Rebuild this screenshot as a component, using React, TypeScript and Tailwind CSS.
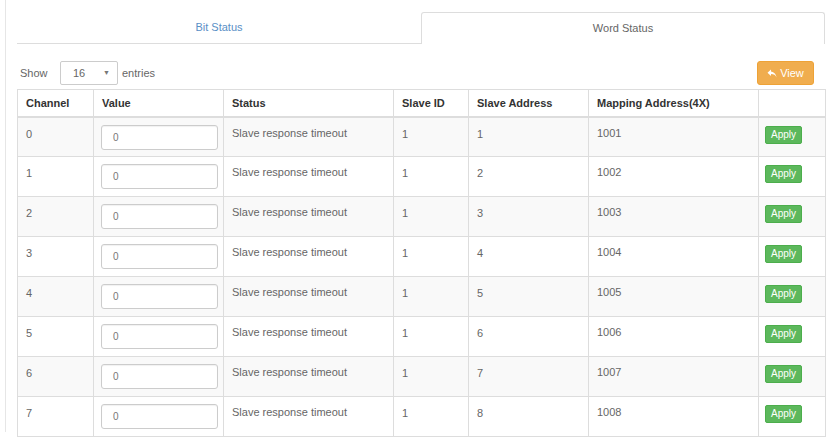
import React from "react";

const rows = Array.from({ length: 8 }, (_, i) => ({
  channel: i,
  value: "0",
  status: "Slave response timeout",
  slaveId: 1,
  slaveAddress: i + 1,
  mapping: 1001 + i,
}));

const cols = [
  { label: "Channel", w: "w-[76px]" },
  { label: "Value", w: "w-[130px]" },
  { label: "Status", w: "w-[170px]" },
  { label: "Slave ID", w: "w-[75px]" },
  { label: "Slave Address", w: "w-[120px]" },
  { label: "Mapping Address(4X)", w: "w-[170px]" },
  { label: "", w: "w-[67px]" },
];

function ReplyIcon() {
  return (
    <svg width="10" height="9" viewBox="0 0 20 18" fill="currentColor">
      <path d="M8 1L1 7.5 8 14V10c5.5 0 9 1.5 11 7-0.8-6.5-4.5-11-11-11.8z" />
    </svg>
  );
}

export default function App() {
  return (
    <div
      className="w-[837px] h-[439px] bg-white overflow-hidden text-[11px] text-[#666]"
      style={{ fontFamily: '"Liberation Sans", Arial, sans-serif' }}
    >
      <div className="ml-[5px] h-[432px] border-l border-[#e6e6e6] pl-[11px] pr-[12px] pt-[12px]">
        {/* tabs */}
        <div className="flex">
          <div className="w-[404px] h-[32px] flex items-center justify-center border-b border-[#ddd] text-[#5a8fc6]">
            Bit Status
          </div>
          <div className="w-[404px] h-[32px] flex items-center justify-center border border-b-0 border-[#ddd] rounded-t-[3px] text-[#666]">
            Word Status
          </div>
        </div>

        {/* controls */}
        <div className="flex items-center justify-between mt-[17px] h-[24px] pr-[11px]">
          <div className="flex items-center pl-[3px]">
            <span className="w-[36px]">Show</span>
            <div className="ml-[4px] w-[58px] h-[24px] border border-[#ccc] rounded-[2px] flex items-center justify-between pl-[12px] pr-[7px]">
              <span>16</span>
              <span className="text-[7px] text-[#777]">▼</span>
            </div>
            <span className="ml-[4px]">entries</span>
          </div>
          <button className="w-[57px] h-[24px] rounded-[3px] bg-[#f0ad4e] border border-[#eea236] text-white flex items-center justify-center gap-[3px] text-[11px]">
            <ReplyIcon />
            View
          </button>
        </div>

        {/* table */}
        <table className="mt-[4px] border-collapse table-fixed w-[808px]">
          <thead>
            <tr className="h-[27px]">
              {cols.map((c, i) => (
                <th
                  key={i}
                  className={`${c.w} border border-[#ddd] border-b-2 px-[8px] text-left font-bold text-[#333] align-middle`}
                >
                  {c.label}
                </th>
              ))}
            </tr>
          </thead>
          <tbody>
            {rows.map((r) => (
              <tr key={r.channel} className={`h-[40px] ${r.channel % 2 === 0 ? "bg-[#f9f9f9]" : "bg-white"}`}>
                <td className="border border-[#ddd] px-[8px] pt-[8px] align-top leading-[16px]">{r.channel}</td>
                <td className="border border-[#ddd] px-[7px] pt-[7px] pb-[6px] align-top">
                  <div className="w-[117px] h-[25px] bg-white border border-[#ccc] rounded-[3px] shadow-[inset_0_1px_1px_rgba(0,0,0,0.06)] flex items-center pl-[11px] text-[10px] text-[#777]">
                    {r.value}
                  </div>
                </td>
                <td className="border border-[#ddd] px-[8px] pt-[7px] align-top leading-[16px]">{r.status}</td>
                <td className="border border-[#ddd] px-[8px] pt-[8px] align-top leading-[16px]">{r.slaveId}</td>
                <td className="border border-[#ddd] px-[8px] pt-[8px] align-top leading-[16px]">{r.slaveAddress}</td>
                <td className="border border-[#ddd] px-[8px] pt-[7px] align-top leading-[16px]">{r.mapping}</td>
                <td className="border border-[#ddd] pl-[6px] pt-[8px] align-top">
                  <button className="w-[37px] h-[18px] rounded-[2px] bg-[#5cb85c] border border-[#4cae4c] text-white text-[10px] leading-none flex items-center justify-center">
                    Apply
                  </button>
                </td>
              </tr>
            ))}
          </tbody>
        </table>
      </div>
    </div>
  );
}
